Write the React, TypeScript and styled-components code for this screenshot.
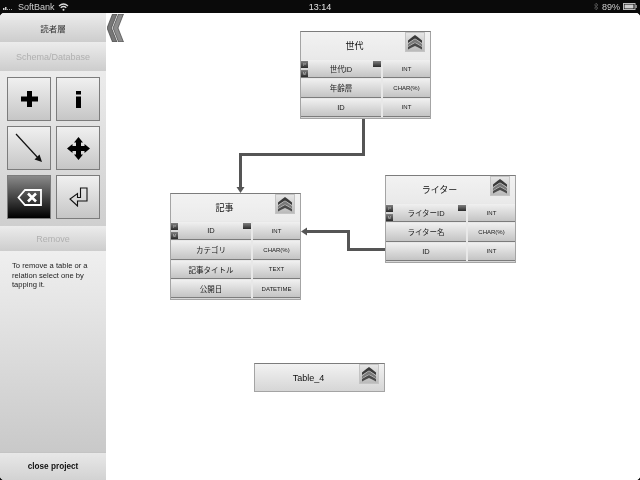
import * as React from 'react'
import styled, { createGlobalStyle } from 'styled-components';

const Global = createGlobalStyle`
    html, body {
        margin: 0;
        padding: 0;
        background: #fff;
    }
    body {
        font-family: "Liberation Sans", "Noto Sans CJK JP", sans-serif;
    }
`;

const Screen = styled.div`
    width: 640px;
    height: 480px;
    overflow: hidden;
    display: flex;
    flex-direction: column;
    position: relative;
    background: #fff;
    filter: blur(0.3px);
`;

const Corner = styled.div<{ $side: 'tl' | 'tr' | 'bl' | 'br' }>`
    position: absolute;
    width: 3px;
    height: 3px;
    left: ${p => (p.$side[1] === 'l' ? '0' : 'auto')};
    right: ${p => (p.$side[1] === 'r' ? '0' : 'auto')};
    top: ${p => (p.$side[0] === 't' ? '13px' : 'auto')};
    bottom: ${p => (p.$side[0] === 'b' ? '0' : 'auto')};
    background: radial-gradient(circle at ${p => (p.$side[1] === 'l' ? '100%' : '0')} ${p => (p.$side[0] === 't' ? '100%' : '0')}, transparent 2.5px, #0a0a0a 3px);
`;

const StatusBar = styled.div`
    height: 13px;
    flex: none;
    background: #0a0a0a;
    color: #cfcfcf;
    font-size: 9px;
    display: grid;
    grid-template-columns: 1fr auto 1fr;
    align-items: center;
    padding: 0 3px;
`;

const StatusLeft = styled.div`
    display: flex;
    align-items: center;
    gap: 3px;
`;

const StatusRight = styled.div`
    display: flex;
    align-items: center;
    justify-content: flex-end;
    gap: 3px;
`;

const Clock = styled.div`
    color: #e4e4e4;
    font-size: 9px;
`;

const Main = styled.div`
    flex: 1;
    display: flex;
    min-height: 0;
`;

const Sidebar = styled.div`
    width: 106px;
    flex: none;
    display: flex;
    flex-direction: column;
`;

const SideHeader = styled.div<{ $h: number; $faded?: boolean }>`
    height: ${p => p.$h}px;
    flex: none;
    display: flex;
    align-items: center;
    justify-content: center;
    font-size: ${p => (p.$faded ? '9px' : '8.5px')};
    color: ${p => (p.$faded ? '#b0b0b0' : '#333')};
    background: linear-gradient(#ececec, #cdcdcd);
`;

const ToolArea = styled.div`
    height: 155px;
    flex: none;
    box-sizing: border-box;
    padding: 6px 6px 0 7px;
    background: linear-gradient(#ececec, #cfcfcf);
    display: grid;
    grid-template-columns: 44px 44px;
    grid-auto-rows: 44px;
    gap: 5px;
`;

const ToolButton = styled.div<{ $active?: boolean }>`
    box-sizing: border-box;
    border: 1px solid #7c7c7c;
    display: flex;
    align-items: center;
    justify-content: center;
    background: ${p => (p.$active ? 'linear-gradient(#8a8a8a, #000)' : 'linear-gradient(#f0f0f0, #c6c6c6)')};
`;

const HelpText = styled.div`
    flex: 1;
    box-sizing: border-box;
    padding: 10px 12px;
    font-size: 7.6px;
    line-height: 9.5px;
    color: #222;
    background: linear-gradient(#efefef 0%, #e4e4e4 30%, #c9c9c9 100%);
`;

const CloseProject = styled.div`
    height: 28px;
    flex: none;
    box-sizing: border-box;
    display: flex;
    align-items: center;
    justify-content: center;
    font-size: 8.2px;
    font-weight: bold;
    color: #111;
    border-top: 1px solid #c4c4c4;
    background: linear-gradient(#e8e8e8, #d2d2d2);
`;

const Canvas = styled.div`
    flex: 1;
    position: relative;
`;

const Collapse = styled.div`
    position: absolute;
    left: 1px;
    top: 1px;
    line-height: 0;
`;

const Wires = styled.svg`
    position: absolute;
    left: -106px;
    top: -13px;
    width: 640px;
    height: 480px;
`;

const TableCard = styled.div<{ $x: number; $y: number }>`
    position: absolute;
    left: ${p => p.$x - 106}px;
    top: ${p => p.$y - 13}px;
    width: 131px;
    min-height: 29px;
    box-sizing: border-box;
    border: 1px solid #a4a4a4;
    border-top-color: #7c7c7c;
    background: linear-gradient(#f2f2f2, #d6d6d6);
`;

const TableTitle = styled.div`
    height: 27px;
    position: relative;
    display: flex;
    align-items: center;
    justify-content: center;
    padding-right: 22px;
    font-size: 9px;
    color: #111;
`;

const ChevronBox = styled.div`
    position: absolute;
    top: 0;
    right: 5px;
    width: 20px;
    height: 20px;
    box-sizing: border-box;
    background: linear-gradient(#e6e6e6, #bababa);
    border: 1px solid #c4c4c4;
    display: flex;
    align-items: center;
    justify-content: center;
`;

const Rows = styled.div`
    display: flex;
    flex-direction: column;
    gap: 1px;
    padding-top: 1px;
    margin-bottom: 1px;
    background: #e8e8e8;

    &:empty {
        display: none;
    }
`;

const Row = styled.div`
    display: grid;
    grid-template-columns: 80px 1fr;
    gap: 2px;
    height: 18.3px;
`;

const Cell = styled.div<{ $small?: boolean }>`
    position: relative;
    display: flex;
    align-items: center;
    justify-content: center;
    font-size: ${p => (p.$small ? 6 : 7.5)}px;
    color: #1a1a1a;
    border-bottom: 1px solid #7c7c7c;
    background: linear-gradient(#f0f0f0, #c4c4c4);
`;

const KeyTag = styled.span<{ $pos: 'pk' | 'fk' | 'idx' }>`
    position: absolute;
    width: ${p => (p.$pos === 'idx' ? 8 : 7)}px;
    height: ${p => (p.$pos === 'idx' ? 6 : 7)}px;
    background: linear-gradient(#808080, #2a2a2a);
    color: #c4c4c4;
    font-size: 4px;
    line-height: 7px;
    text-align: center;
    left: ${p => (p.$pos === 'idx' ? 'auto' : '0')};
    right: ${p => (p.$pos === 'idx' ? '0' : 'auto')};
    top: ${p => (p.$pos === 'fk' ? '10px' : '1px')};
`;

type Col = { name: string; type: string; keyed?: boolean };

const chevrons = (
    <svg width="16" height="16" viewBox="0 0 16 16">
        <path d="M1 6.5 Q5 3 8 1 Q11 3 15 6.5 L15 9 Q11 6 8 4.5 Q5 6 1 9 Z" fill="#3a3a3a" />
        <path d="M1 10 Q5 7 8 5 Q11 7 15 10 L15 12.5 Q11 9.5 8 8.5 Q5 9.5 1 12.5 Z" fill="#7a7a7a" />
        <path d="M1 13 Q5 10.5 8 9 Q11 10.5 15 13 L15 15.5 Q11 13 8 12 Q5 13 1 15.5 Z" fill="#4a4a4a" />
    </svg>
);

function Table(props: { x: number; y: number; title: string; cols: Col[] }) {
    return (
        <TableCard $x={props.x} $y={props.y}>
            <TableTitle>
                {props.title}
                <ChevronBox>{chevrons}</ChevronBox>
            </TableTitle>
            <Rows>
                {props.cols.map((c) => (
                    <Row key={c.name}>
                        <Cell>
                            {c.keyed && <KeyTag $pos="pk">P</KeyTag>}
                            {c.keyed && <KeyTag $pos="fk">M</KeyTag>}
                            {c.keyed && <KeyTag $pos="idx" />}
                            {c.name}
                        </Cell>
                        <Cell $small>{c.type}</Cell>
                    </Row>
                ))}
            </Rows>
        </TableCard>
    );
}

export default function App() {
    return (
        <Screen>
            <Global />
            <StatusBar>
                <StatusLeft>
                    <svg width="12" height="6" viewBox="0 0 12 6">
                        <rect x="0" y="4" width="1.5" height="2" fill="#ccc" />
                        <rect x="2" y="3" width="1.5" height="3" fill="#ccc" />
                        <rect x="4" y="5" width="1" height="1" fill="#999" />
                        <rect x="6" y="5" width="1" height="1" fill="#999" />
                        <rect x="8" y="5" width="1" height="1" fill="#999" />
                    </svg>
                    <span>SoftBank</span>
                    <svg width="11" height="8" viewBox="0 0 11 8">
                        <path d="M1 3 Q5.5 -1 10 3 M2.7 4.8 Q5.5 2.2 8.3 4.8" stroke="#ddd" strokeWidth="1.2" fill="none" />
                        <circle cx="5.5" cy="6.8" r="1" fill="#ddd" />
                    </svg>
                </StatusLeft>
                <Clock>13:14</Clock>
                <StatusRight>
                    <svg width="6" height="9" viewBox="0 0 6 9">
                        <path d="M1 2.5 L5 6 L3 8 L3 1 L5 3 L1 6.5" stroke="#555" strokeWidth="0.8" fill="none" />
                    </svg>
                    <span>89%</span>
                    <svg width="14" height="7" viewBox="0 0 14 7">
                        <rect x="0.5" y="0.5" width="11.5" height="6" fill="none" stroke="#bbb" />
                        <rect x="1.5" y="1.5" width="9" height="4" fill="#ccc" />
                        <rect x="12.5" y="2" width="1.2" height="3" fill="#bbb" />
                    </svg>
                </StatusRight>
            </StatusBar>
            <Main>
                <Sidebar>
                    <SideHeader $h={29}>読者層</SideHeader>
                    <SideHeader $h={29} $faded>Schema/Database</SideHeader>
                    <ToolArea>
                        <ToolButton>
                            <svg width="17" height="16" viewBox="0 0 17 16">
                                <path d="M6 0 H11 V5.5 H17 V10.5 H11 V16 H6 V10.5 H0 V5.5 H6 Z" fill="#000" />
                            </svg>
                        </ToolButton>
                        <ToolButton>
                            <svg width="5" height="17" viewBox="0 0 5 17">
                                <rect x="0" y="0" width="5" height="3.5" fill="#000" />
                                <rect x="0" y="5.5" width="5" height="11.5" fill="#000" />
                            </svg>
                        </ToolButton>
                        <ToolButton>
                            <svg width="28" height="30" viewBox="0 0 28 30">
                                <path d="M1 1 L24 26" stroke="#111" strokeWidth="1.2" />
                                <path d="M27 29 L19.5 26.5 L24.5 21.5 Z" fill="#111" />
                            </svg>
                        </ToolButton>
                        <ToolButton>
                            <svg width="23" height="23" viewBox="0 0 23 23">
                                <path d="M11.5 0 L16 5.5 H14 V9 H17.5 V7 L23 11.5 L17.5 16 V14 H14 V17.5 H16 L11.5 23 L7 17.5 H9 V14 H5.5 V16 L0 11.5 L5.5 7 V9 H9 V5.5 H7 Z" fill="#000" />
                            </svg>
                        </ToolButton>
                        <ToolButton $active>
                            <svg width="25" height="17" viewBox="0 0 25 17">
                                <path d="M8 1 H24 V16 H8 L1.5 8.5 Z" fill="none" stroke="#fff" strokeWidth="1.8" />
                                <path d="M11 4.5 L19 12.5 M19 4.5 L11 12.5" stroke="#fff" strokeWidth="2.6" />
                            </svg>
                        </ToolButton>
                        <ToolButton>
                            <svg width="19" height="20" viewBox="0 0 19 20">
                                <path d="M11.5 1 H18 V14 H8.5 V19 L1 12 L8.5 6.5 V10.5 H11.5 Z" fill="none" stroke="#111" strokeWidth="1.1" />
                            </svg>
                        </ToolButton>
                    </ToolArea>
                    <SideHeader $h={25} $faded>Remove</SideHeader>
                    <HelpText>To remove a table or a relation select one by tapping it.</HelpText>
                    <CloseProject>close project</CloseProject>
                </Sidebar>
                <Canvas>
                    <Collapse>
                        <svg width="17" height="28" viewBox="0 0 17 28">
                            <path d="M5.5 0 H10 L4.5 14 L10 28 H5.5 L0 14 Z" fill="#777" stroke="#333" strokeWidth="0.6" />
                            <path d="M11.5 0 H16.5 L11 14 L16.5 28 H11.5 L6 14 Z" fill="#8c8c8c" stroke="#333" strokeWidth="0.6" />
                        </svg>
                    </Collapse>
                    <Wires>
                        <path d="M363.5 118 V154.5 H240.5 V188" fill="none" stroke="#555" strokeWidth="3" />
                        <path d="M236.5 187 H244.5 L240.5 193 Z" fill="#555" />
                        <path d="M385 249.5 H348.5 V231.5 H306" fill="none" stroke="#555" strokeWidth="3" />
                        <path d="M307 227.5 V235.5 L301 231.5 Z" fill="#555" />
                    </Wires>
                    <Table x={300} y={31} title="世代" cols={[
                        { name: '世代ID', type: 'INT', keyed: true },
                        { name: '年齢層', type: 'CHAR(%)' },
                        { name: 'ID', type: 'INT' },
                    ]} />
                    <Table x={170} y={193} title="記事" cols={[
                        { name: 'ID', type: 'INT', keyed: true },
                        { name: 'カテゴリ', type: 'CHAR(%)' },
                        { name: '記事タイトル', type: 'TEXT' },
                        { name: '公開日', type: 'DATETIME' },
                    ]} />
                    <Table x={385} y={175} title="ライター" cols={[
                        { name: 'ライターID', type: 'INT', keyed: true },
                        { name: 'ライター名', type: 'CHAR(%)' },
                        { name: 'ID', type: 'INT' },
                    ]} />
                    <Table x={254} y={363} title="Table_4" cols={[]} />
                </Canvas>
            </Main>
            <Corner $side="tl" />
            <Corner $side="tr" />
            <Corner $side="bl" />
            <Corner $side="br" />
        </Screen>
    );
}
